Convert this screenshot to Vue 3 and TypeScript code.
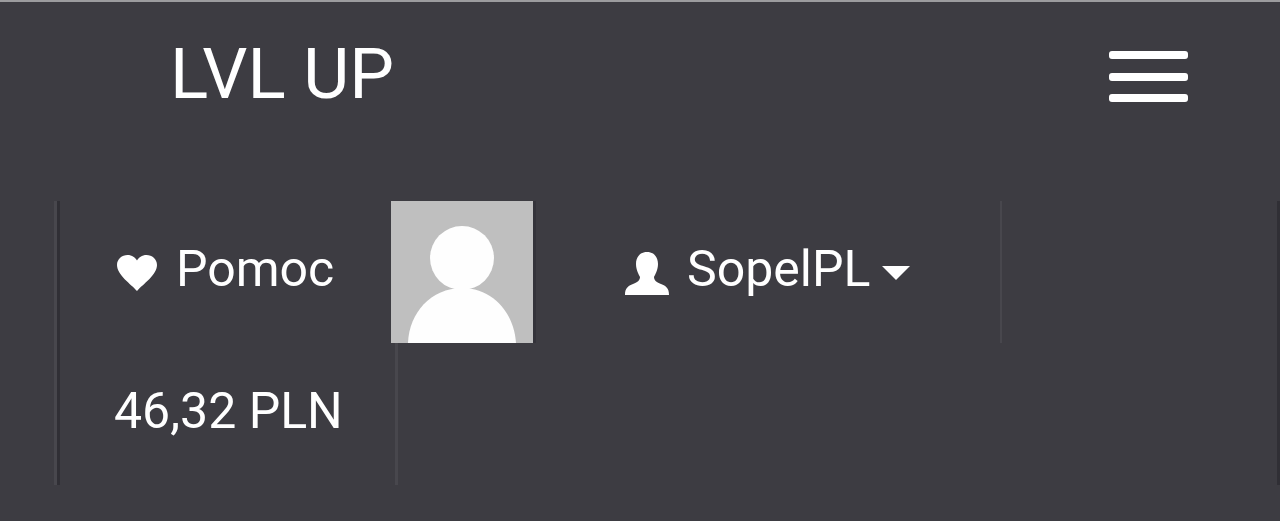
<script setup lang="ts">
const brand: string = 'LVL UP'
</script>

<template>
  <div class="page">
    <header class="top">
      <div class="brand">{{ brand }}</div>
      <div class="burger"><span></span><span></span><span></span></div>
    </header>
    <nav class="nav">
      <div class="row">
        <a class="item help">
          <svg class="heart" viewBox="0 0 40 36"><path d="M20 36 C14 29 0 20 0 10 C0 4 5 0 10.500 0 C15 0 18.500 2.500 20 5.500 C21.500 2.500 25 0 29.500 0 C35 0 40 4 40 10 C40 20 26 29 20 36 Z" fill="#fff"/></svg>
          <span class="label">Pomoc</span>
        </a>
        <div class="avatar">
          <svg viewBox="0 0 142 142" width="142" height="142">
            <rect width="142" height="142" fill="#bfbfbf"/>
            <circle cx="71" cy="57" r="32" fill="#fefefe"/>
            <path d="M17 142 C18 112 40 87 71 87 C102 87 123 112 125 142 Z" fill="#fefefe"/>
          </svg>
        </div>
        <a class="item user">
          <svg class="person" viewBox="0 0 44 43"><path d="M22 0 C29 0 33 5 33 12 C33 18 30 23 29 25 C29 28 31 30 36 32 C41 34 44 36 44 43 L0 43 C0 36 3 34 8 32 C13 30 15 28 15 25 C14 23 11 18 11 12 C11 5 15 0 22 0 Z" fill="#fff"/></svg>
          <span class="label">SopelPL</span>
          <svg class="caret" viewBox="0 0 28 14"><path d="M0 0 L28 0 L14 14 Z" fill="#fff"/></svg>
        </a>
      </div>
      <div class="row">
        <a class="item wallet"><span class="label">46,32 PLN</span></a>
      </div>
    </nav>
  </div>
</template>

<style scoped>
.page {
  width: 1280px;
  height: 521px;
  box-sizing: border-box;
  background: #3d3c42;
  border-top: 2px solid #9c9c9e;
  font-family: Roboto, "Liberation Sans", sans-serif;
  color: #fff;
  overflow: hidden;
  filter: blur(0.5px);
}
.top {
  height: 199px;
  display: flex;
  justify-content: space-between;
  align-items: flex-start;
  padding: 0 92px 0 170px;
  box-sizing: border-box;
}
.brand {
  font-size: 71px;
  font-weight: 400;
  line-height: 84px;
  margin-top: 30px;
}
.burger {
  width: 79px;
  margin-top: 49px;
  display: flex;
  flex-direction: column;
  gap: 13.5px;
}
.burger span {
  height: 8px;
  border-radius: 3px;
  background: #fff;
}
.nav {
  margin-left: 54px;
  border-left: 3px solid #48474d;
  border-right: 3px solid #302f35;
}
.row {
  height: 142px;
  display: flex;
  border-left: 3px solid #302f35;
}
.item {
  display: flex;
  align-items: center;
  box-sizing: border-box;
  font-size: 50px;
  color: #fff;
}
.label {
  margin-top: -7px;
}
.help {
  width: 331px;
  padding-left: 57px;
  gap: 19px;
}
.heart {
  width: 40px;
  height: 36px;
  margin-top: 2px;
}
.avatar {
  width: 142px;
  height: 142px;
  box-shadow: 3px 0 0 #34333a;
}
.avatar svg {
  display: block;
}
.user {
  width: 469px;
  padding-left: 92px;
  border-right: 2px solid #48474d;
}
.person {
  width: 44px;
  height: 43px;
  margin: 2px 18px 0 0;
}
.caret {
  width: 28px;
  height: 14px;
  margin: 2px 0 0 12px;
}
.wallet {
  width: 338px;
  padding-left: 54px;
  border-right: 3px solid #48474d;
}
</style>
